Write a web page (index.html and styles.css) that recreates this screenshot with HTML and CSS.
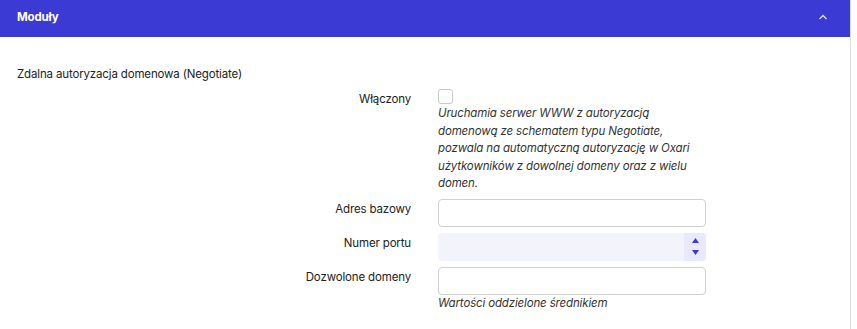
FILE: index.html
```html
<!DOCTYPE html>
<html lang="pl">
<head>
<meta charset="utf-8">
<link rel="stylesheet" href="styles.css">
</head>
<body>
<div class="page">
  <div class="panel">
    <div class="panel-header">
      <span class="panel-title">Moduły</span>
      <svg class="chev" width="10" height="6" viewBox="0 0 10 6"><path d="M1.5 5 L5 1.5 L8.5 5" fill="none" stroke="#dcdcf7" stroke-width="1.4"/></svg>
    </div>
    <div class="panel-body">
      <div class="section-title">Zdalna autoryzacja domenowa (Negotiate)</div>
      <div class="form">
        <div class="label">Włączony</div>
        <div class="field">
          <span class="checkbox"></span>
          <div class="help help-long">Uruchamia serwer WWW z autoryzacją domenową ze schematem typu Negotiate, pozwala na automatyczną autoryzację w Oxari użytkowników z dowolnej domeny oraz z wielu domen.</div>
        </div>

        <div class="label">Adres bazowy</div>
        <div class="field"><input class="input" type="text"></div>

        <div class="label">Numer portu</div>
        <div class="field">
          <div class="number">
            <span class="number-value"></span>
            <span class="spinner">
              <svg width="7" height="5" viewBox="0 0 7 5"><path d="M0 5 L3.5 0 L7 5Z" fill="#3b3ad4"/></svg>
              <svg width="7" height="5" viewBox="0 0 7 5"><path d="M0 0 L3.5 5 L7 0Z" fill="#3b3ad4"/></svg>
            </span>
          </div>
        </div>

        <div class="label">Dozwolone domeny</div>
        <div class="field">
          <input class="input" type="text">
          <div class="help">Wartości oddzielone średnikiem</div>
        </div>
      </div>
    </div>
  </div>
</div>
</body>
</html>
```
FILE: styles.css
```css
* { box-sizing: border-box; }
html, body { margin: 0; height: 100%; background: #fff; }
body {
  font-family: Inter, "Noto Sans", "Liberation Sans", sans-serif;
  font-size: 11.5px;
  letter-spacing: -0.15px;
  color: #222;
}
.page {
  width: 851px;
  height: 100%;
  border-right: 1px solid #dedede;
}
.panel { width: 850px; }
.panel-header {
  height: 37px;
  background: #3b3ad4;
  display: flex;
  align-items: center;
  justify-content: space-between;
  padding: 0 22px 0 17px;
}
.panel-title {
  color: #fff;
  font-weight: 700;
  font-size: 11.5px;
  margin-top: -4px;
}
.chev { margin-top: -3px; }
.panel-body { padding: 29px 17px 0 17px; }
.section-title {
  line-height: 16px;
  color: #222;
  margin-bottom: 7px;
}
.form {
  display: grid;
  grid-template-columns: 394px 268px;
  column-gap: 27px;
  row-gap: 6px;
  align-items: start;
}
.label {
  text-align: right;
  line-height: 16px;
  padding-top: 2px;
  color: #222;
}
.field { display: flex; flex-direction: column; }
.checkbox {
  width: 15px;
  height: 15px;
  border: 1px solid #c9c9c9;
  border-radius: 3px;
  background: #fff;
}
.help {
  font-style: italic;
  line-height: 17.5px;
  color: #333;
}
.help-long { width: 262px; margin-top: 1px; }
.input {
  width: 268px;
  height: 28px;
  border: 1px solid #d0d0d0;
  border-radius: 4px;
  background: #fff;
  margin: 0;
  padding: 0 8px;
  font: inherit;
}
.number {
  width: 268px;
  height: 28px;
  border-radius: 4px;
  background: #f3f4fb;
  display: flex;
  justify-content: space-between;
  overflow: hidden;
}
.spinner {
  width: 22px;
  background: #e8eafc;
  display: flex;
  flex-direction: column;
  align-items: center;
  justify-content: center;
  gap: 7px;
}
```
